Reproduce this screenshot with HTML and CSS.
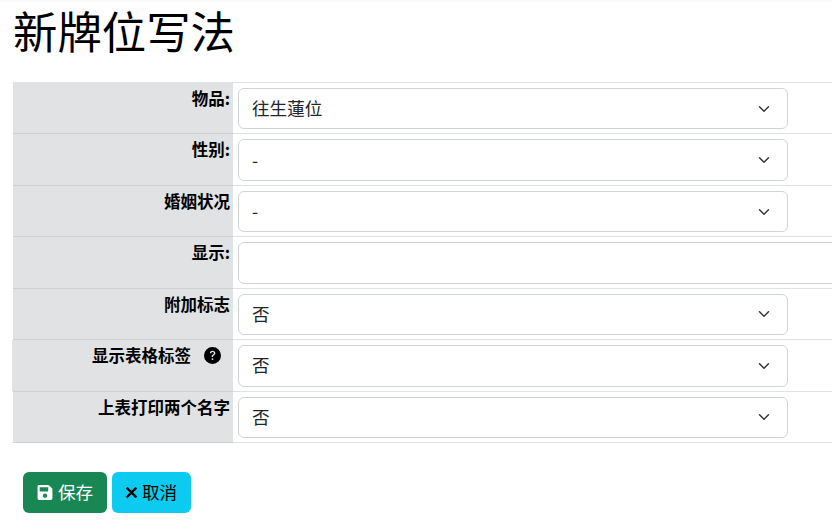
FILE: index.html
```html
<!DOCTYPE html>
<html lang="zh">
<head>
<meta charset="utf-8">
<title>新牌位写法</title>
<link rel="stylesheet" href="styles.css">
</head>
<body>
<div class="topline"></div>
<main class="page">
  <h1 class="title">新牌位写法</h1>
  <form class="form">
    <table class="grid">
      <tbody>
        <tr>
          <th class="lab">物品:</th>
          <td class="val"><select class="sel"><option>往生蓮位</option></select></td>
        </tr>
        <tr>
          <th class="lab">性别:</th>
          <td class="val"><select class="sel"><option>-</option></select></td>
        </tr>
        <tr>
          <th class="lab">婚姻状况</th>
          <td class="val"><select class="sel"><option>-</option></select></td>
        </tr>
        <tr>
          <th class="lab">显示:</th>
          <td class="val"><input class="txt" type="text"></td>
        </tr>
        <tr>
          <th class="lab">附加标志</th>
          <td class="val"><select class="sel"><option>否</option></select></td>
        </tr>
        <tr>
          <th class="lab lab-help"><span class="help-wrap">显示表格标签<svg class="help" viewBox="0 0 16 16" aria-hidden="true"><path fill="#000" d="M16 8A8 8 0 1 1 0 8a8 8 0 0 1 16 0zM5.500 5.900h1.300c.1-.7.6-1.100 1.300-1.100.7 0 1.200.4 1.200 1 0 .5-.2.8-.9 1.300-.8.5-1.100 1-1.100 1.800v.5h1.300v-.3c0-.6.2-.9.9-1.400.8-.5 1.200-1.100 1.200-2 0-1.300-1.100-2.200-2.600-2.200-1.600 0-2.600.9-2.600 2.400zM8 12.300a.9.9 0 1 0 0-1.800.9.9 0 0 0 0 1.800z"/></svg></span></th>
          <td class="val"><select class="sel"><option>否</option></select></td>
        </tr>
        <tr>
          <th class="lab">上表打印两个名字</th>
          <td class="val"><select class="sel"><option>否</option></select></td>
        </tr>
      </tbody>
    </table>
    <div class="actions">
      <button class="btn save" type="button"><svg class="ico" viewBox="0 0 448 512" aria-hidden="true"><path fill="#fff" d="M433.900 129.900l-83.900-83.900A48 48 0 0 0 316.100 32H48C21.500 32 0 53.500 0 80v352c0 26.500 21.500 48 48 48h352c26.500 0 48-21.500 48-48V163.900a48 48 0 0 0-14.100-34zM224 416c-35.300 0-64-28.700-64-64 0-35.300 28.700-64 64-64s64 28.700 64 64c0 35.300-28.700 64-64 64zm96-304.500V212c0 6.600-5.400 12-12 12H76c-6.600 0-12-5.400-12-12V108c0-6.600 5.400-12 12-12h228.500c3.200 0 6.200 1.300 8.500 3.500l3.500 3.500c2.200 2.300 3.500 5.300 3.500 8.500z"/></svg>保存</button>
      <button class="btn cancel" type="button"><svg class="ico-x" viewBox="0 0 12 12" aria-hidden="true"><path d="M1.500 1.500l9 9m0-9l-9 9" stroke="#000" stroke-width="2" fill="none"/></svg>取消</button>
    </div>
  </form>
</main>
</body>
</html>
```
FILE: styles.css
```css
* { box-sizing: border-box; }
html, body { margin: 0; padding: 0; background: #fff; overflow: hidden; }
body {
  width: 832px;
  height: 531px;
  font-family: "Noto Sans CJK SC", "Liberation Sans", sans-serif;
  font-size: 17.6px;
  color: #212529;
}
.topline { height: 2px; background: #f8f9fa; }
.page { padding: 0 0 0 13px; width: 1000px; }
.title {
  margin: 0;
  font-size: 44.4px;
  font-weight: 400;
  line-height: 56px;
  height: 80px;
  color: #000;
}
.grid { border-collapse: collapse; table-layout: fixed; width: 987px; }
.grid tr { height: 51.43px; }
.lab {
  width: 220px;
  background: #e1e2e4;
  border-bottom: 1px solid #ced0d3;
  text-align: right;
  vertical-align: top;
  padding: 2px 3px 0 0;
  font-size: 16.5px;
  line-height: 26px;
  font-weight: 700;
  color: #000;
}
.grid tr:first-child .lab { border-top: 1px solid #e1e2e4; }
.lab-help { padding-right: 12px; box-shadow: -1px 0 0 #e1e2e4; }
.help-wrap { display: inline-flex; align-items: center; }
.help { width: 17px; height: 17px; margin-left: 13px; }
.val {
  border-top: 1px solid #dee2e6;
  border-bottom: 1px solid #dee2e6;
  padding: 5px 5px 4px;
  vertical-align: top;
}
.sel, .txt {
  display: block;
  height: 41.43px;
  border: 1px solid #ced4da;
  border-radius: 6px;
  background-color: #fff;
  font-family: inherit;
  font-size: 17.6px;
  color: #212529;
  padding: 0 13px 2px;
  margin: 0;
}
.sel {
  width: 550px;
  appearance: none;
  background-image: url("data:image/svg+xml,%3csvg xmlns='http://www.w3.org/2000/svg' viewBox='0 0 16 16'%3e%3cpath fill='none' stroke='%23343a40' stroke-linecap='round' stroke-linejoin='round' stroke-width='2' d='m2 5 6 6 6-6'/%3e%3c/svg%3e");
  background-repeat: no-repeat;
  background-position: right 15px center;
  background-size: 16px 12px;
}
.txt { width: 760px; }
.actions { display: flex; gap: 5px; padding: 29px 0 0 10px; }
.btn {
  display: inline-flex;
  align-items: center;
  height: 41px;
  border: 0;
  border-radius: 6px;
  font-family: inherit;
  font-size: 17.6px;
  padding: 0 13px 2px;
  margin: 0;
}
.save { background: #198754; color: #fff; width: 84px; padding-left: 14px; }
.cancel { background: #0dcaf0; color: #000; width: 79px; }
.ico { width: 16px; height: 17px; margin-right: 5px; position: relative; top: 1px; }
.ico-x { width: 13px; height: 13px; margin-right: 4px; position: relative; top: 1px; }
```
